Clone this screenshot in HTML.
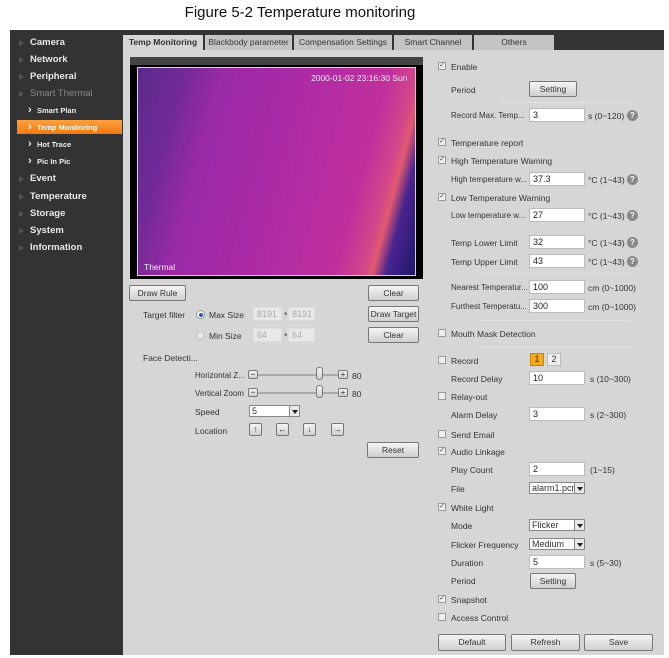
<!DOCTYPE html>
<html><head><meta charset="utf-8"><style>
*{margin:0;padding:0;box-sizing:border-box}
body{width:669px;height:658px;background:#fff;position:relative;overflow:hidden;font-family:"Liberation Sans",sans-serif;font-size:8.5px;color:#333}
.a{position:absolute;white-space:nowrap}
.title{left:155px;width:290px;top:4px;text-align:center;font-size:15px;color:#111;font-family:"Liberation Sans",sans-serif}
.frame{left:10px;top:30px;width:654px;height:625px;background:#333}
.panel{left:123px;top:50px;width:541px;height:605px;background:#d6d6d6}
.nav{color:#e8e8e8;font-weight:bold;font-size:9.5px;left:30px}
.nav:before{content:"";position:absolute;left:-11px;top:3px;border-left:5px solid #555;border-top:3px solid transparent;border-bottom:3px solid transparent}
.sub{color:#eee;font-weight:bold;font-size:7.5px;left:37px}
.sub:before{content:"›";position:absolute;left:-9px;top:-2px;font-size:11px}
.tab{top:35px;height:15px;background:#c4c4c4;font-size:8.5px;text-align:center;line-height:15px;color:#333}
.btn{background:linear-gradient(#f4f4f4,#cfcfcf);border:1px solid #777;border-radius:2px;text-align:center;font-size:8.5px;color:#333}
.inp{background:#fff;border:1px solid #bbb;height:14px;width:56px;font-size:9px;padding-left:3px;line-height:12px;color:#222}
.cb{width:8px;height:8px;border:1px solid #999;background:#eee;font-size:7px;line-height:6px;text-align:center;color:#446}
.hp{width:11px;height:11px;border-radius:50%;background:#888;color:#fff;font-size:8px;text-align:center;line-height:11px;font-weight:bold}
.sel{background:#fff;border:1px solid #888;height:12px;font-size:9px;padding-left:2px;line-height:10px}
.sel i{position:absolute;right:0;top:0;width:10px;height:10px;background:#e8e8e8;border-left:1px solid #888}
.sel i:after{content:"";position:absolute;left:2px;top:4px;border-top:4px solid #222;border-left:3px solid transparent;border-right:3px solid transparent}
.sep{height:1px;background:#e4e4e4}
.sm{font-size:8px}
</style></head><body>
<div class="a title">Figure 5-2 Temperature monitoring</div>
<div class="a frame"></div>
<div class="a panel"></div>

<div class="a nav" style="top:37px">Camera</div>
<div class="a nav" style="top:54px">Network</div>
<div class="a nav" style="top:71px">Peripheral</div>
<div class="a nav" style="top:88px;color:#888;font-weight:normal">Smart Thermal</div>
<div class="a sub" style="top:106px">Smart Plan</div>
<div class="a" style="left:17px;top:120px;width:105px;height:14px;background:linear-gradient(#ffa040,#f07a10)"></div>
<div class="a sub" style="top:123px;color:#fff">Temp Monitoring</div>
<div class="a sub" style="top:140px">Hot Trace</div>
<div class="a sub" style="top:157px">Pic In Pic</div>
<div class="a nav" style="top:173px">Event</div>
<div class="a nav" style="top:191px">Temperature</div>
<div class="a nav" style="top:208px">Storage</div>
<div class="a nav" style="top:225px">System</div>
<div class="a nav" style="top:242px">Information</div>

<div class="a tab" style="left:123px;width:80px;background:#d6d6d6;font-weight:bold;height:16px">Temp Monitoring</div>
<div class="a tab" style="left:205px;width:87px">Blackbody parameter</div>
<div class="a tab" style="left:294px;width:98px">Compensation Settings</div>
<div class="a tab" style="left:394px;width:78px">Smart Channel</div>
<div class="a tab" style="left:474px;width:80px">Others</div>

<!-- video -->
<div class="a" style="left:130px;top:57px;width:293px;height:222px;background:#000"></div>
<div class="a" style="left:130px;top:57px;width:293px;height:8px;background:#444"></div>
<div class="a" style="left:137px;top:67px;width:279px;height:209px;background:linear-gradient(105deg,#5a2a8a 0%,#722a98 14%,#9a2aa6 26%,#a82aa6 45%,#b62ca2 62%,#c0309c 76%,#d2468a 84%,#e05a70 87%,#4a2490 91%,#1e1868 100%);border:1.5px solid #ffe600"></div>
<div class="a" style="left:311px;top:73px;color:#eee;font-size:8.5px">2000-01-02 23:16:30 Sun</div>
<div class="a" style="left:144px;top:262px;color:#eee;font-size:8.5px">Thermal</div>

<div class="a btn" style="left:129px;top:285px;width:57px;height:16px;line-height:14px">Draw Rule</div>
<div class="a btn" style="left:368px;top:285px;width:51px;height:16px;line-height:14px">Clear</div>
<div class="a" style="left:143px;top:310px">Target filter</div>
<div class="a" style="left:196px;top:310px;width:9px;height:9px;border-radius:50%;background:#fff;border:1px solid #999"><div style="margin:1.5px;width:4px;height:4px;border-radius:50%;background:#35c"></div></div>
<div class="a" style="left:209px;top:310px">Max Size</div>
<div class="a inp" style="left:253px;top:307px;width:29px;color:#aaa;border-color:#ddd;background:#e8e8e8">8191</div>
<div class="a" style="left:284px;top:310px">*</div>
<div class="a inp" style="left:288px;top:307px;width:27px;color:#aaa;border-color:#ddd;background:#e8e8e8">8191</div>
<div class="a btn" style="left:368px;top:306px;width:51px;height:16px;line-height:14px">Draw Target</div>
<div class="a" style="left:196px;top:331px;width:9px;height:9px;border-radius:50%;background:#e8e8e8;border:1px solid #bbb"></div>
<div class="a" style="left:209px;top:331px">Min Size</div>
<div class="a inp" style="left:253px;top:328px;width:29px;color:#aaa;border-color:#ddd;background:#e8e8e8">64</div>
<div class="a" style="left:284px;top:331px">*</div>
<div class="a inp" style="left:288px;top:328px;width:27px;color:#aaa;border-color:#ddd;background:#e8e8e8">64</div>
<div class="a btn" style="left:368px;top:327px;width:51px;height:16px;line-height:14px">Clear</div>
<div class="a" style="left:143px;top:353px">Face Detecti...</div>

<div class="a sm" style="left:195px;top:371px">Horizontal Z...</div>
<div class="a" style="left:252px;top:374px;width:86px;height:2px;background:#aaa"></div>
<div class="a btn" style="left:248px;top:370px;width:10px;height:9px;line-height:6px">−</div>
<div class="a btn" style="left:316px;top:367px;width:7px;height:13px;border-radius:3px"></div>
<div class="a btn" style="left:338px;top:370px;width:10px;height:9px;line-height:7px">+</div>
<div class="a" style="left:352px;top:371px">80</div>
<div class="a sm" style="left:195px;top:389px">Vertical Zoom</div>
<div class="a" style="left:252px;top:392px;width:86px;height:2px;background:#aaa"></div>
<div class="a btn" style="left:248px;top:388px;width:10px;height:9px;line-height:6px">−</div>
<div class="a btn" style="left:316px;top:385px;width:7px;height:13px;border-radius:3px"></div>
<div class="a btn" style="left:338px;top:388px;width:10px;height:9px;line-height:7px">+</div>
<div class="a" style="left:352px;top:389px">80</div>
<div class="a" style="left:195px;top:407px">Speed</div>
<div class="a sel" style="left:249px;top:405px;width:51px">5<i></i></div>
<div class="a" style="left:195px;top:426px">Location</div>
<div class="a btn" style="left:249px;top:423px;width:13px;height:13px;line-height:11px">↑</div>
<div class="a btn" style="left:276px;top:423px;width:13px;height:13px;line-height:11px">←</div>
<div class="a btn" style="left:303px;top:423px;width:13px;height:13px;line-height:11px">↓</div>
<div class="a btn" style="left:331px;top:423px;width:13px;height:13px;line-height:11px">→</div>
<div class="a btn" style="left:367px;top:442px;width:52px;height:16px;line-height:14px">Reset</div>

<!-- right column -->
<div class="a cb" style="left:438px;top:62px">✓</div><div class="a" style="left:451px;top:62px">Enable</div>
<div class="a" style="left:451px;top:85px">Period</div>
<div class="a btn" style="left:529px;top:81px;width:48px;height:16px;line-height:14px">Setting</div>
<div class="a sep" style="left:500px;top:102px;width:130px"></div>
<div class="a sm" style="left:451px;top:111px">Record Max. Temp...</div>
<div class="a inp" style="left:529px;top:108px">3</div><div class="a" style="left:588px;top:111px">s (0~120)</div><div class="a hp" style="left:627px;top:110px">?</div>

<div class="a cb" style="left:438px;top:138px">✓</div><div class="a" style="left:451px;top:138px">Temperature report</div>
<div class="a cb" style="left:438px;top:156px">✓</div><div class="a" style="left:451px;top:156px">High Temperature Warning</div>
<div class="a sm" style="left:451px;top:175px">High temperature w...</div>
<div class="a inp" style="left:529px;top:172px">37.3</div><div class="a" style="left:588px;top:175px">°C (1~43)</div><div class="a hp" style="left:627px;top:174px">?</div>
<div class="a cb" style="left:438px;top:193px">✓</div><div class="a" style="left:451px;top:193px">Low Temperature Warning</div>
<div class="a sm" style="left:451px;top:211px">Low temperature w...</div>
<div class="a inp" style="left:529px;top:208px">27</div><div class="a" style="left:588px;top:211px">°C (1~43)</div><div class="a hp" style="left:627px;top:210px">?</div>
<div class="a" style="left:451px;top:238px">Temp Lower Limit</div>
<div class="a inp" style="left:529px;top:235px">32</div><div class="a" style="left:588px;top:238px">°C (1~43)</div><div class="a hp" style="left:627px;top:237px">?</div>
<div class="a" style="left:451px;top:257px">Temp Upper Limit</div>
<div class="a inp" style="left:529px;top:254px">43</div><div class="a" style="left:588px;top:257px">°C (1~43)</div><div class="a hp" style="left:627px;top:256px">?</div>
<div class="a sep" style="left:480px;top:273px;width:150px"></div>
<div class="a sm" style="left:451px;top:283px">Nearest Temperatur...</div>
<div class="a inp" style="left:529px;top:280px">100</div><div class="a" style="left:588px;top:283px">cm (0~1000)</div>
<div class="a sm" style="left:451px;top:302px">Furthest Temperatu...</div>
<div class="a inp" style="left:529px;top:299px">300</div><div class="a" style="left:588px;top:302px">cm (0~1000)</div>
<div class="a sep" style="left:480px;top:320px;width:150px"></div>
<div class="a cb" style="left:438px;top:329px"></div><div class="a" style="left:451px;top:329px">Mouth Mask Detection</div>
<div class="a sep" style="left:480px;top:347px;width:150px"></div>
<div class="a cb" style="left:438px;top:356px"></div><div class="a" style="left:451px;top:356px">Record</div>
<div class="a" style="left:530px;top:353px;width:14px;height:13px;background:#f4a81c;border:1px solid #c88010;text-align:center;line-height:11px;font-size:9px">1</div>
<div class="a" style="left:547px;top:353px;width:14px;height:13px;background:#eee;border:1px solid #bbb;text-align:center;line-height:11px;font-size:9px">2</div>
<div class="a" style="left:451px;top:374px">Record Delay</div>
<div class="a inp" style="left:529px;top:371px">10</div><div class="a" style="left:590px;top:374px">s (10~300)</div>
<div class="a cb" style="left:438px;top:392px"></div><div class="a" style="left:451px;top:392px">Relay-out</div>
<div class="a" style="left:451px;top:410px">Alarm Delay</div>
<div class="a inp" style="left:529px;top:407px">3</div><div class="a" style="left:590px;top:410px">s (2~300)</div>
<div class="a cb" style="left:438px;top:430px"></div><div class="a" style="left:451px;top:430px">Send Email</div>
<div class="a cb" style="left:438px;top:447px">✓</div><div class="a" style="left:451px;top:447px">Audio Linkage</div>
<div class="a" style="left:451px;top:465px">Play Count</div>
<div class="a inp" style="left:529px;top:462px">2</div><div class="a" style="left:590px;top:465px">(1~15)</div>
<div class="a" style="left:451px;top:484px">File</div>
<div class="a sel" style="left:529px;top:482px;width:56px">alarm1.pcm<i></i></div>
<div class="a cb" style="left:438px;top:503px">✓</div><div class="a" style="left:451px;top:503px">White Light</div>
<div class="a" style="left:451px;top:521px">Mode</div>
<div class="a sel" style="left:529px;top:519px;width:56px">Flicker<i></i></div>
<div class="a" style="left:451px;top:540px">Flicker Frequency</div>
<div class="a sel" style="left:529px;top:538px;width:56px">Medium<i></i></div>
<div class="a" style="left:451px;top:558px">Duration</div>
<div class="a inp" style="left:529px;top:555px">5</div><div class="a" style="left:590px;top:558px">s (5~30)</div>
<div class="a" style="left:451px;top:576px">Period</div>
<div class="a btn" style="left:530px;top:573px;width:46px;height:16px;line-height:14px">Setting</div>
<div class="a cb" style="left:438px;top:595px">✓</div><div class="a" style="left:451px;top:595px">Snapshot</div>
<div class="a cb" style="left:438px;top:613px"></div><div class="a" style="left:451px;top:613px">Access Control</div>
<div class="a btn" style="left:438px;top:634px;width:68px;height:17px;line-height:15px">Default</div>
<div class="a btn" style="left:511px;top:634px;width:69px;height:17px;line-height:15px">Refresh</div>
<div class="a btn" style="left:584px;top:634px;width:69px;height:17px;line-height:15px">Save</div>
</body></html>
